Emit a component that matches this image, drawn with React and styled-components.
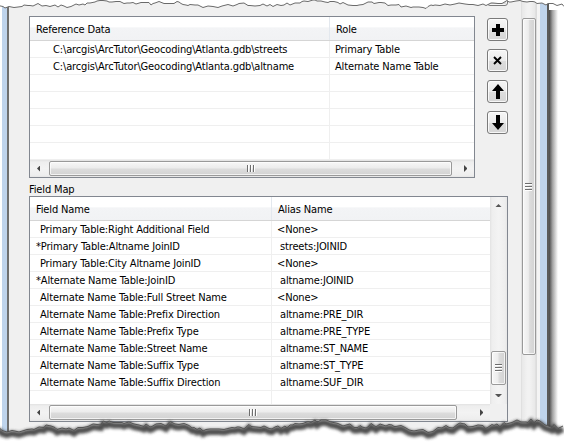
import React from 'react';
import styled, { createGlobalStyle } from 'styled-components';

const Global = createGlobalStyle`
  html, body { margin: 0; padding: 0; background: #fff; }
  body {
    font-family: "DejaVu Sans Condensed", "DejaVu Sans", sans-serif;
    font-stretch: condensed;
    font-size: 11px;
    letter-spacing: -0.15px;
    color: #000;
  }
`;

const Root = styled.div`
  position: relative;
  width: 564px;
  height: 444px;
  overflow: hidden;
  background: #fff;
  display: flex;
  align-items: flex-start;
`;

const Frame = styled.div`
  margin-left: 2px;
  height: 432px;
  display: flex;
  flex: none;
`;

const FrameBlue = styled.div`
  width: ${p => p.$w}px;
  background: #bfd4ec;
  flex: none;
`;

const FrameDark = styled.div`
  width: 2px;
  background: #5a5a5a;
  flex: none;
`;

const Client = styled.div`
  width: 531px;
  border-left: 2px solid #6f6f6f;
  background: #f0f0f0;
  display: flex;
  flex: none;
`;

const Content = styled.div`
  width: 479px;
  padding: 16px 0 0 20px;
  display: flex;
  flex-direction: column;
  flex: none;
`;

const TopRow = styled.div`
  display: flex;
  gap: 12px;
  align-items: flex-start;
`;

const ButtonCol = styled.div`
  width: 21px;
  margin-top: -33px;
  display: flex;
  flex-direction: column;
  gap: 8px;
`;

const ToolButton = styled.div`
  width: 21px;
  height: 23px;
  box-sizing: border-box;
  border: 1px solid #7a7a7a;
  border-radius: 3px;
  background: linear-gradient(#f6f6f6, #ebebeb 50%, #dddddd 51%, #d6d6d6);
  box-shadow: inset 0 0 0 1px rgba(255,255,255,0.8);
  display: flex;
  align-items: center;
  justify-content: center;
  margin-bottom: ${p => p.$mb || 0}px;
`;

const TableBox = styled.div`
  width: ${p => p.$w}px;
  height: ${p => p.$h}px;
  box-sizing: border-box;
  border: 1px solid #828790;
  background: #fff;
  display: flex;
  flex: none;
  overflow: hidden;
`;

const TableMain = styled.div`
  flex: 1;
  min-width: 0;
  display: flex;
  flex-direction: column;
`;

const HeaderRow = styled.div`
  height: 24px;
  box-sizing: border-box;
  border-bottom: 1px solid #d5d5d5;
  background: linear-gradient(#ffffff 0%, #ffffff 45%, #f3f4f6 46%, #f1f2f4 100%);
  display: flex;
  flex: none;
`;

const HeaderCell = styled.div`
  width: ${p => (p.$w ? p.$w + 'px' : 'auto')};
  flex: ${p => (p.$w ? 'none' : '1')};
  box-sizing: border-box;
  padding-left: 6px;
  padding-top: 6px;
  line-height: 13px;
  border-right: ${p => (p.$w ? '1px solid #e3e8ee' : 'none')};
  white-space: nowrap;
`;

const Row = styled.div`
  height: 17px;
  box-sizing: border-box;
  border-bottom: 1px solid #efefef;
  display: flex;
  flex: none;
`;

const Cell = styled.div`
  width: ${p => (p.$w ? p.$w + 'px' : 'auto')};
  flex: ${p => (p.$w ? 'none' : '1')};
  box-sizing: border-box;
  padding-left: ${p => p.$pad}px;
  padding-top: 2px;
  line-height: 13px;
  border-right: ${p => (p.$w ? '1px solid #efefef' : 'none')};
  white-space: nowrap;
  overflow: hidden;
`;

const Blank = styled.div`
  height: ${p => p.$h}px;
  display: flex;
  flex: none;
`;

const BlankCol = styled.div`
  width: ${p => p.$w}px;
  border-right: 1px solid #efefef;
  box-sizing: border-box;
`;

const HScroll = styled.div`
  height: 17px;
  flex: none;
  display: flex;
  align-items: center;
  background: linear-gradient(#e2e2e2, #eeeeee 2px, #f3f3f3 50%, #eeeeee calc(100% - 2px), #e6e6e6);
`;

const VScroll = styled.div`
  width: 17px;
  flex: none;
  display: flex;
  flex-direction: column;
  align-items: center;
  background: linear-gradient(to right, #e2e2e2, #eeeeee 2px, #f3f3f3 50%, #eeeeee calc(100% - 2px), #e6e6e6);
`;

const ArrowBox = styled.div`
  width: 17px;
  height: 17px;
  flex: none;
  display: flex;
  align-items: center;
  justify-content: center;
`;

const Corner = styled.div`
  width: 17px;
  height: 17px;
  flex: none;
  background: #f0f0f0;
`;

const HThumb = styled.div`
  width: ${p => p.$w}px;
  margin-left: ${p => p.$ml}px;
  height: 15px;
  box-sizing: border-box;
  border: 1px solid #999999;
  border-radius: 2px;
  background: linear-gradient(#f7f7f7, #ececec 45%, #dcdcdc 55%, #d2d2d2);
  box-shadow: inset 0 0 0 1px rgba(255,255,255,0.7);
  display: flex;
  align-items: center;
  justify-content: center;
  flex: none;
`;

const VThumb = styled.div`
  width: 15px;
  height: ${p => p.$h}px;
  box-sizing: border-box;
  border: 1px solid #999999;
  border-radius: 2px;
  background: linear-gradient(to right, #f7f7f7, #ececec 45%, #dcdcdc 55%, #d2d2d2);
  box-shadow: inset 0 0 0 1px rgba(255,255,255,0.7);
  display: flex;
  flex-direction: column;
  align-items: center;
  justify-content: center;
  flex: none;
`;

const VTrack = styled.div`
  flex: 1;
  display: flex;
  flex-direction: column;
  align-items: center;
  justify-content: flex-end;
  padding-bottom: 2px;
`;

const GripH = styled.div`
  display: flex;
  gap: 1px;
`;

const GripLineV = styled.div`
  width: 1px;
  height: 7px;
  background: #6e6e6e;
  border-right: 1px solid #fff;
`;

const GripV = styled.div`
  display: flex;
  flex-direction: column;
  gap: 1px;
`;

const GripLineH = styled.div`
  width: 7px;
  height: 1px;
  background: #6e6e6e;
  border-bottom: 1px solid #fff;
`;

const Spacer = styled.div`
  flex: 1;
`;

const FieldLabel = styled.div`
  height: 18px;
  display: flex;
  align-items: flex-end;
  line-height: 12px;
  box-sizing: border-box;
`;

const Gap = styled.div`
  width: ${p => p.$w}px;
  flex: none;
`;

const OuterScroll = styled.div`
  width: 15px;
  flex: none;
  padding-top: 18px;
  box-sizing: border-box;
  border-left: 1px solid #e0e0e0;
  border-right: 1px solid #e0e0e0;
  background: linear-gradient(to right, #e8e8e8, #f2f2f2 40%, #f2f2f2 60%, #e8e8e8);
  display: flex;
  flex-direction: column;
  align-items: center;
`;

const OuterThumb = styled(VThumb)`
  width: 14px;
`;

const Gutter = styled.div`
  width: 4px;
  flex: none;
  border-left: 1px solid #dcdcdc;
  box-sizing: border-box;
  background: #f4f4f4;
`;

const Shadow = styled.div`
  width: 9px;
  height: 420px;
  margin-top: 10px;
  flex: none;
  background: linear-gradient(to right, rgba(50,50,50,0.9), rgba(90,90,90,0.55) 40%, rgba(255,255,255,0));
`;

const EdgeSvg = styled.svg`
  position: absolute;
  left: 0;
  top: ${p => p.$top}px;
  pointer-events: none;
`;

/* icons */
const Tri = ({ dir, size = 4, color = '#444' }) => {
  const s = size;
  let pts;
  if (dir === 'left') pts = `${s},0 0,${s} ${s},${2 * s}`;
  if (dir === 'right') pts = `0,0 ${s},${s} 0,${2 * s}`;
  if (dir === 'up') pts = `0,${s} ${s},0 ${2 * s},${s}`;
  if (dir === 'down') pts = `0,0 ${s},${s} ${2 * s},0`;
  const w = dir === 'left' || dir === 'right' ? s : 2 * s;
  const h = dir === 'left' || dir === 'right' ? 2 * s : s;
  return (
    <svg width={w} height={h} viewBox={`0 0 ${w} ${h}`}>
      <polygon points={pts} fill={color} />
    </svg>
  );
};

const PlusIcon = () => (
  <svg width="12" height="12" viewBox="0 0 12 12">
    <rect x="0" y="4" width="12" height="4" fill="#000" />
    <rect x="4" y="0" width="4" height="12" fill="#000" />
  </svg>
);

const XIcon = () => (
  <svg width="9" height="9" viewBox="0 0 9 9">
    <path d="M1 1 L8 8 M8 1 L1 8" stroke="#000" strokeWidth="1.9" />
  </svg>
);

const UpIcon = () => (
  <svg width="12" height="15" viewBox="0 0 12 15">
    <polygon points="6,0 12,7 8,7 8,15 4,15 4,7 0,7" fill="#000" />
  </svg>
);

const DownIcon = () => (
  <svg width="12" height="15" viewBox="0 0 12 15">
    <polygon points="4,0 8,0 8,8 12,8 6,15 0,8 4,8" fill="#000" />
  </svg>
);

const FolderIcon = () => (
  <svg width="12" height="10" viewBox="0 0 12 10">
    <path d="M0 1 H4 L5 2 H11 V9 H0 Z" fill="#e8c44a" stroke="#a88220" strokeWidth="1" />
  </svg>
);

const Grip = () => (
  <GripH>
    <GripLineV />
    <GripLineV />
    <GripLineV />
  </GripH>
);

const GripVert = () => (
  <GripV>
    <GripLineH />
    <GripLineH />
    <GripLineH />
  </GripV>
);

/* torn edges */
function makeRng(seed) {
  let s = seed;
  return () => {
    s = (s * 16807) % 2147483647;
    return (s - 1) / 2147483646;
  };
}

function jagged(seed, base, amp, w) {
  const r = makeRng(seed);
  const pts = [];
  let x = -2;
  while (x <= w + 2) {
    const y =
      base +
      amp * 0.45 * Math.sin(x / 31 + seed) +
      amp * 0.3 * Math.sin(x / 11 + seed * 2) +
      (r() - 0.5) * amp * 0.6;
    pts.push([x, Math.round(y * 2) / 2]);
    x += 2 + Math.floor(r() * 4);
  }
  return pts;
}

const topPts = jagged(7, 4, 5, 564);
const botPts = jagged(13, 426, 7, 564);
const toStr = pts => pts.map(p => `${p[0]},${p[1]}`).join(' ');

const TopEdge = () => {
  const line = toStr(topPts);
  return (
    <EdgeSvg $top={0} width="564" height="16" viewBox="0 0 564 16">
      <polygon points={`-2,-2 ${line} 566,-2`} fill="#fff" />
      <polyline points={line} fill="none" stroke="#6a6a6a" strokeWidth="1" />
    </EdgeSvg>
  );
};

const BottomEdge = () => {
  const line = toStr(botPts);
  const shadowLine = toStr(botPts.map(p => [p[0], p[1] + 3]));
  return (
    <EdgeSvg $top={410} width="564" height="34" viewBox="0 410 564 34">
      <defs>
        <filter id="blur" x="-5%" y="-50%" width="110%" height="200%">
          <feGaussianBlur stdDeviation="1.6" />
        </filter>
      </defs>
      <polygon points={`${line} 566,446 -2,446`} fill="#fff" />
      <polyline points={shadowLine} fill="none" stroke="#3a3a3a" strokeWidth="6" filter="url(#blur)" opacity="0.9" />
      <polyline points={line} fill="none" stroke="#555" strokeWidth="1" />
    </EdgeSvg>
  );
};

const refRows = [
  ['C:\\arcgis\\ArcTutor\\Geocoding\\Atlanta.gdb\\streets', 'Primary Table'],
  ['C:\\arcgis\\ArcTutor\\Geocoding\\Atlanta.gdb\\altname', 'Alternate Name Table'],
  ['', ''],
  ['', ''],
  ['', ''],
  ['', ''],
  ['', ''],
];

const fieldRows = [
  ['Primary Table:Right Additional Field', '<None>', true, false],
  ['*Primary Table:Altname JoinID', 'streets:JOINID', false, true],
  ['Primary Table:City Altname JoinID', '<None>', true, false],
  ['*Alternate Name Table:JoinID', 'altname:JOINID', false, true],
  ['Alternate Name Table:Full Street Name', '<None>', true, false],
  ['Alternate Name Table:Prefix Direction', 'altname:PRE_DIR', true, true],
  ['Alternate Name Table:Prefix Type', 'altname:PRE_TYPE', true, true],
  ['Alternate Name Table:Street Name', 'altname:ST_NAME', true, true],
  ['Alternate Name Table:Suffix Type', 'altname:ST_TYPE', true, true],
  ['Alternate Name Table:Suffix Direction', 'altname:SUF_DIR', true, true],
];

export default function App() {
  return (
    <>
      <Global />
      <Root>
        <Frame>
          <FrameBlue $w={5} />
          <Client>
            <Content>
              <TopRow>
                <TableBox $w={446} $h={162}>
                  <TableMain>
                    <HeaderRow>
                      <HeaderCell $w={300}>Reference Data</HeaderCell>
                      <HeaderCell>Role</HeaderCell>
                    </HeaderRow>
                    {refRows.map((r, i) => (
                      <Row key={i}>
                        <Cell $w={300} $pad={23}>{r[0]}</Cell>
                        <Cell $pad={5}>{r[1]}</Cell>
                      </Row>
                    ))}
                    <HScroll>
                      <ArrowBox><Tri dir="left" size={3.5} /></ArrowBox>
                      <HThumb $w={403} $ml={2}><Grip /></HThumb>
                      <Spacer />
                      <ArrowBox><Tri dir="right" size={3.5} /></ArrowBox>
                    </HScroll>
                  </TableMain>
                </TableBox>
                <ButtonCol>
                  <ToolButton $mb={4}><FolderIcon /></ToolButton>
                  <ToolButton><PlusIcon /></ToolButton>
                  <ToolButton><XIcon /></ToolButton>
                  <ToolButton><UpIcon /></ToolButton>
                  <ToolButton><DownIcon /></ToolButton>
                </ButtonCol>
              </TopRow>
              <FieldLabel>Field Map</FieldLabel>
              <TableBox $w={479} $h={226}>
                <TableMain>
                  <HeaderRow>
                    <HeaderCell $w={242}>Field Name</HeaderCell>
                    <HeaderCell>Alias Name</HeaderCell>
                  </HeaderRow>
                  {fieldRows.map((r, i) => (
                    <Row key={i}>
                      <Cell $w={242} $pad={r[2] ? 10 : 6}>{r[0]}</Cell>
                      <Cell $pad={r[3] ? 8 : 5}>{r[1]}</Cell>
                    </Row>
                  ))}
                  <Blank $h={13}>
                    <BlankCol $w={242} />
                  </Blank>
                  <HScroll>
                    <ArrowBox><Tri dir="left" size={3.5} /></ArrowBox>
                    <HThumb $w={408} $ml={2}><Grip /></HThumb>
                    <Spacer />
                    <ArrowBox><Tri dir="right" size={3.5} /></ArrowBox>
                  </HScroll>
                </TableMain>
                <VScroll>
                  <ArrowBox><Tri dir="up" size={3.5} color="#555" /></ArrowBox>
                  <VTrack>
                    <VThumb $h={34}><GripVert /></VThumb>
                  </VTrack>
                  <ArrowBox><Tri dir="down" size={3.5} color="#555" /></ArrowBox>
                  <Corner />
                </VScroll>
              </TableBox>
            </Content>
            <Gap $w={13} />
            <OuterScroll>
              <OuterThumb $h={337}><GripVert /></OuterThumb>
            </OuterScroll>
            <Gutter />
          </Client>
          <FrameBlue $w={7} />
          <FrameDark />
        </Frame>
        <Shadow />
        <TopEdge />
        <BottomEdge />
      </Root>
    </>
  );
}
